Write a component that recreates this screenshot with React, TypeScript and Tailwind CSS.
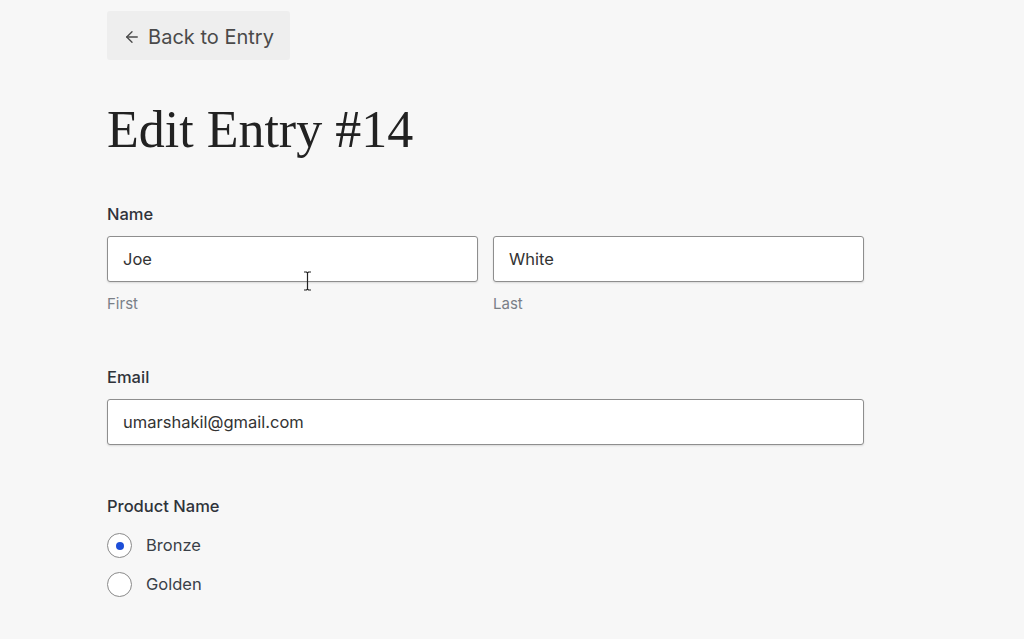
import { ArrowLeft } from 'lucide-react';

type TextFieldProps = {
  value: string;
  hint?: string;
};

function TextField({ value, hint }: TextFieldProps) {
  return (
    <div className="flex flex-1 flex-col">
      <div className="flex h-[46px] items-center rounded-[3px] border border-[#8e8e8e] bg-white px-[15px] text-[16.5px] text-[#333] shadow-[0_1px_2px_rgba(0,0,0,0.12)]">
        {value}
      </div>
      {hint && <span className="mt-[12px] text-[15px] leading-[20px] text-[#7a7f87]">{hint}</span>}
    </div>
  );
}

function Radio({ label, checked }: { label: string; checked?: boolean }) {
  return (
    <label className="flex h-[39px] items-center gap-[14px]">
      <span className="flex h-[25px] w-[25px] items-center justify-center rounded-full border-[1.5px] border-[#8a8a8a] bg-white">
        {checked && <span className="h-[8px] w-[8px] rounded-full bg-[#1d4ed8]" />}
      </span>
      <span className="text-[16.5px] text-[#3a3f47]">{label}</span>
    </label>
  );
}

export default function App() {
  return (
    <div className="relative min-h-[639px] bg-[#f7f7f7] font-['Inter',sans-serif]">
      <div className="box-content w-[757px] pl-[107px] pt-[11px]">
        <button className="flex h-[49px] w-[183px] items-center justify-center gap-[7px] rounded-[3px] bg-[#eeeeee] pt-[2px] text-[20px] text-[#4a4a4a]">
          <ArrowLeft size={18} strokeWidth={1.8} />
          Back to Entry
        </button>

        <h1 className="mt-[40px] font-['Liberation_Serif',serif] text-[52px] leading-[60px] text-[#222]">
          Edit Entry #14
        </h1>

        <div className="mt-[44px]">
          <div className="mb-[12px] text-[16.5px] font-medium leading-[20px] text-[#2f333a]">Name</div>
          <div className="flex gap-[15px]">
            <TextField value="Joe" hint="First" />
            <TextField value="White" hint="Last" />
          </div>
        </div>

        <div className="mt-[53px]">
          <div className="mb-[12px] text-[16.5px] font-medium leading-[20px] text-[#2f333a]">Email</div>
          <TextField value="umarshakil@gmail.com" />
        </div>

        <div className="mt-[51px]">
          <div className="mb-[10px] text-[16.5px] font-medium leading-[20px] text-[#2f333a]">Product Name</div>
          <Radio label="Bronze" checked />
          <Radio label="Golden" />
        </div>
      </div>

      {/* text cursor over the first name field */}
      <svg className="absolute left-[303px] top-[271px]" width="9" height="20" viewBox="0 0 9 20">
        <path d="M1 1h2.5L4.5 2 5.5 1H8M4.5 2v16M1 19h2.5l1-1 1 1H8" fill="none" stroke="#222" strokeWidth="1.2" />
      </svg>
    </div>
  );
}
